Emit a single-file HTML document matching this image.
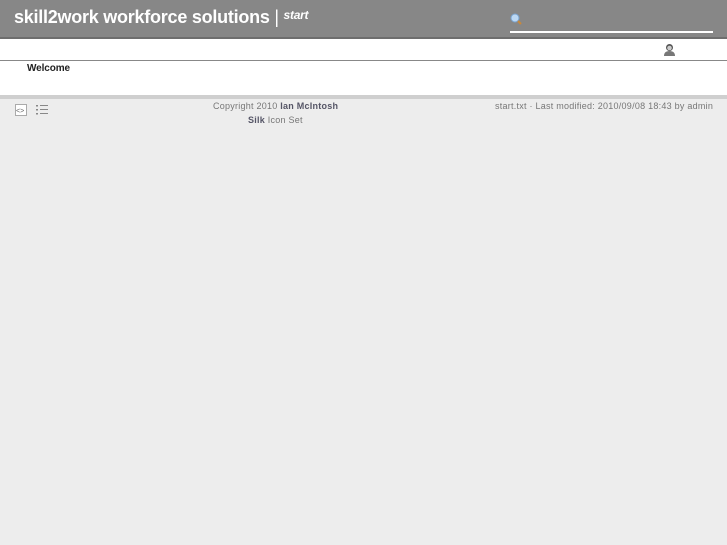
<!DOCTYPE html>
<html><head><style>
body{margin:0;width:727px;height:545px;background:#ededed;font-family:"Liberation Sans",sans-serif;position:relative;overflow:hidden}
.hd{position:absolute;left:0;top:0;width:727px;height:37px;background:#878787;border-bottom:2px solid #6e6e6e}
.t{position:absolute;left:14px;top:7px;color:#fff;font-weight:bold;font-size:18px;letter-spacing:-0.25px;white-space:nowrap}
.t i{font-size:12px;font-weight:bold;position:relative;top:-4px}
.t span{font-weight:normal}
.sl{position:absolute;left:510px;top:31px;width:203px;height:2px;background:#fff}
.bar{position:absolute;left:0;top:39px;width:727px;height:21px;background:#fff;border-bottom:1px solid #888}
.ct{position:absolute;left:0;top:61px;width:727px;height:34px;background:#fff}
.w{position:absolute;left:27px;top:63px;font-size:10px;font-weight:bold;color:#222;letter-spacing:-0.1px}
.gb{position:absolute;left:0;top:95px;width:727px;height:4px;background:#cfcfcf}
.f{position:absolute;font-size:9px;color:#777;white-space:nowrap;letter-spacing:0.25px}
.f b{color:#556}
</style></head><body>
<div class="hd"><div class="t">skill2work workforce solutions <span>|</span> <i>start</i></div>
<svg style="position:absolute;left:510px;top:13px" width="12" height="12"><circle cx="5" cy="5" r="4" fill="#bcd8f4" stroke="#7aa4d0"/><line x1="8" y1="8" x2="11" y2="11" stroke="#c8883a" stroke-width="2"/></svg>
<div class="sl"></div></div>
<div class="bar"><svg style="position:absolute;left:663px;top:4px" width="13" height="13"><circle cx="6.5" cy="4.5" r="3.5" fill="#555"/><circle cx="6.5" cy="5" r="2.3" fill="#ccc"/><path d="M1 13 Q1 8 6.5 8 Q12 8 12 13Z" fill="#777"/></svg></div>
<div class="ct"></div>
<div class="w">Welcome</div>
<div class="gb"></div>
<svg style="position:absolute;left:14px;top:103px" width="14" height="14"><rect x="1.5" y="1.5" width="11" height="11" fill="#fff" stroke="#aaa"/><text x="2" y="10" font-size="7" fill="#666" font-family="Liberation Sans">&lt;&gt;</text></svg>
<svg style="position:absolute;left:36px;top:104px" width="13" height="12"><g fill="#888"><rect x="0" y="1" width="2" height="1.5"/><rect x="0" y="5" width="2" height="1.5"/><rect x="0" y="9" width="2" height="1.5"/><rect x="4" y="1" width="8" height="1"/><rect x="4" y="5" width="8" height="1"/><rect x="4" y="9" width="8" height="1"/></g></svg>
<div class="f" style="left:213px;top:101px">Copyright 2010 <b>Ian McIntosh</b></div>
<div class="f" style="left:248px;top:115px"><b>Silk</b> Icon Set</div>
<div class="f" style="left:495px;top:101px">start.txt · Last modified: 2010/09/08 18:43 by admin</div>
</body></html>
